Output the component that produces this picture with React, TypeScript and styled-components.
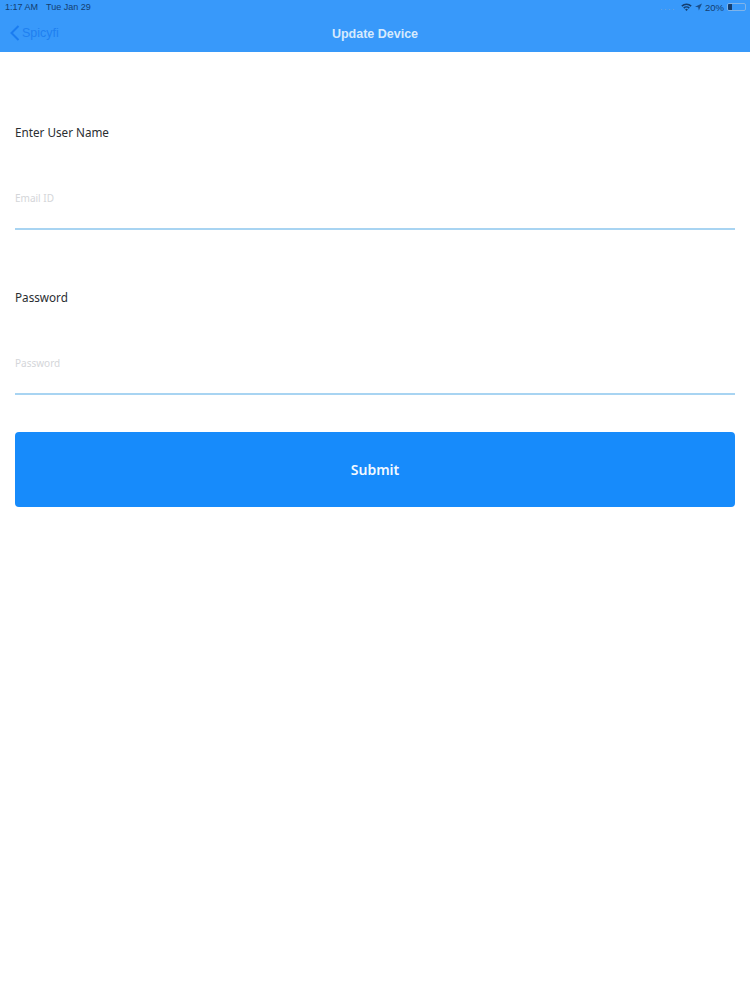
import React from "react"
import styled, { createGlobalStyle } from "styled-components"

const GlobalStyle = createGlobalStyle`
  html, body {
    margin: 0;
    padding: 0;
    background: #ffffff;
  }
  * {
    box-sizing: border-box;
  }
`

export default function App() {
  return (
    <>
      <GlobalStyle />
      <Page>
        <Header>
          <StatusBar>
            <StatusGroup>
              <span>1:17 AM</span>
              <StatusDate>Tue Jan 29</StatusDate>
            </StatusGroup>
            <StatusGroup>
              <SignalDots>....</SignalDots>
              <svg width="11" height="8" viewBox="0 0 11 8">
                <path d="M0.3 2.6 A7.4 7.4 0 0 1 10.7 2.6 L9.6 3.8 A5.8 5.8 0 0 0 1.4 3.8 Z" fill="#143e70" />
                <path d="M2.2 4.6 A4.6 4.6 0 0 1 8.8 4.6 L7.7 5.7 A3 3 0 0 0 3.3 5.7 Z" fill="#143e70" />
                <path d="M4.1 6.5 A2 2 0 0 1 6.9 6.5 L5.5 8 Z" fill="#143e70" />
              </svg>
              <svg width="7" height="8" viewBox="0 0 8 8">
                <path d="M8 0 L4.4 8 L3.6 4.4 L0 3.6 Z" fill="#1a4f8c" />
              </svg>
              <Percent>20%</Percent>
              <Battery>
                <BatteryFill />
              </Battery>
            </StatusGroup>
          </StatusBar>
          <NavBar>
            <BackLink>
              <svg width="10" height="16" viewBox="0 0 10 16">
                <path d="M8.5 1 L1.5 8 L8.5 15" fill="none" stroke="#1a7cf0" strokeWidth="2" />
              </svg>
              <span>Spicyfi</span>
            </BackLink>
            <NavTitle>Update Device</NavTitle>
          </NavBar>
        </Header>
        <Form>
          <Field>
            <Label>Enter User Name</Label>
            <Placeholder>Email ID</Placeholder>
            <Underline />
          </Field>
          <Field>
            <Label>Password</Label>
            <Placeholder>Password</Placeholder>
            <Underline />
          </Field>
          <SubmitButton>Submit</SubmitButton>
        </Form>
      </Page>
    </>
  )
}

const Page = styled.div`
  width: 750px;
  height: 1000px;
  background: #ffffff;
  overflow: hidden;
  font-family: "Noto Sans", "Open Sans", sans-serif;
`

const Header = styled.header`
  height: 52px;
  background: #3899fa;
  display: flex;
  flex-direction: column;
`

const StatusBar = styled.div`
  height: 14px;
  padding: 0 4px 0 5px;
  display: flex;
  align-items: center;
  justify-content: space-between;
  font-family: "Liberation Sans", sans-serif;
  font-size: 9px;
  color: #143e70;
`

const StatusGroup = styled.div`
  display: flex;
  align-items: center;
  gap: 3px;
`

const StatusDate = styled.span`
  margin-left: 5px;
`

const Percent = styled.span`
  font-size: 9.5px;
`

const SignalDots = styled.span`
  color: #6fa3d8;
  letter-spacing: 1.5px;
  margin-right: 2px;
`

const Battery = styled.div`
  width: 19px;
  height: 8px;
  border: 1px solid #7fb4ea;
  border-radius: 2px;
  overflow: hidden;
`

const BatteryFill = styled.div`
  width: 4px;
  height: 100%;
  background: #143e70;
`

const NavBar = styled.div`
  position: relative;
  flex: 1;
  display: flex;
  align-items: center;
  justify-content: center;
  padding-top: 2px;
`

const BackLink = styled.a`
  position: absolute;
  left: 10px;
  top: 11px;
  display: flex;
  align-items: center;
  gap: 2px;
  font-family: "Liberation Sans", sans-serif;
  font-size: 12.5px;
  color: #1f80f0;
`

const NavTitle = styled.h1`
  margin: 0;
  font-family: "Liberation Sans", sans-serif;
  font-size: 12.5px;
  font-weight: 700;
  color: #d6eafd;
`

const Form = styled.main`
  padding: 0 15px;
  display: flex;
  flex-direction: column;
`

const Field = styled.div`
  display: flex;
  flex-direction: column;
  padding-top: 71px;

  & + & {
    padding-top: 58px;
  }
`

const Label = styled.label`
  font-size: 11.7px;
  line-height: 18px;
  color: #2a2d31;
`

const Placeholder = styled.span`
  margin-top: 49.5px;
  font-size: 10px;
  line-height: 14px;
  color: #d4d6d9;
`

const Underline = styled.div`
  margin-top: 23.5px;
  height: 2px;
  background: #a8d4f2;
`

const SubmitButton = styled.button`
  margin-top: 37px;
  height: 75px;
  border: none;
  border-radius: 4px;
  background: #178bfb;
  color: #f2f8ff;
  font-family: "Noto Sans", sans-serif;
  font-size: 14px;
  font-weight: 600;
`
